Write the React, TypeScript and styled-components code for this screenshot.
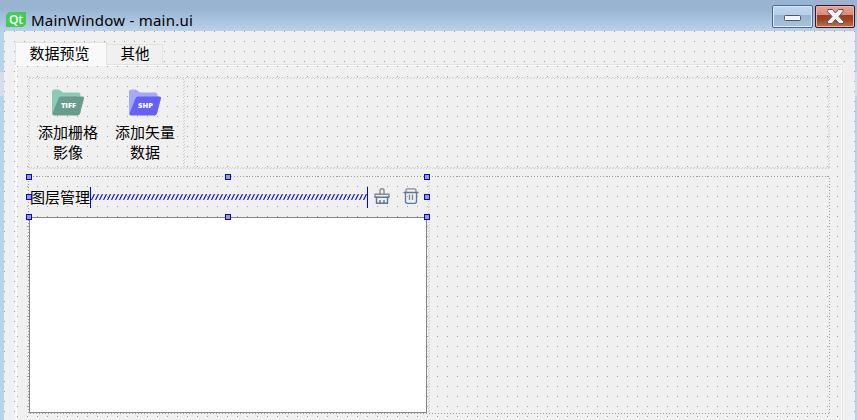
import React from 'react';
import styled, { createGlobalStyle, css } from 'styled-components';

const Global = createGlobalStyle`
  * { box-sizing: border-box; }
  html, body { margin: 0; padding: 0; overflow: hidden; }
  body { font-family: "Noto Sans CJK SC", sans-serif; font-size: 15px; color: #000; }
`;

const dots = (x: number, y: number) => css`
  background-color: #f0f0f0;
  background-image: conic-gradient(from 90deg at 9px 9px, #a0a0a0 25%, transparent 0);
  background-size: 10px 10px;
  background-position: ${x}px ${y}px;
`;

const Window = styled.div`
  width: 857px;
  height: 420px;
  display: flex;
  flex-direction: column;
  background: linear-gradient(#b9d1ea 0 72px, #d5dde6 72px 96px, #b9d1ea 96px);
  overflow: hidden;
`;

const TitleBar = styled.header`
  height: 31px;
  flex: none;
  display: flex;
  align-items: flex-start;
  padding: 5px 2px 0 6px;
  background: linear-gradient(#99b4d1, #9ab5d3 30%, #b9d1ea);
`;

const Logo = styled.svg`
  width: 20px;
  height: 15px;
  margin: 7px 5px 0 0;
  overflow: visible;
`;

const Title = styled.h1`
  margin: 4px 0 0;
  font: 15px/22px "Noto Sans", sans-serif;
  letter-spacing: 0.23px;
  flex: 1;
  white-space: nowrap;
`;

const WindowButton = styled.button<{ $close?: boolean }>`
  width: ${p => (p.$close ? 40 : 41)}px;
  height: 23px;
  margin-left: 2px;
  padding: 0;
  border: 1px solid ${p => (p.$close ? '#43101c' : '#496b97')};
  border-radius: 2px;
  box-shadow: inset 0 0 0 1px ${p => (p.$close ? '#e9b5a5' : '#dce8f5')};
  background: ${p =>
    p.$close
      ? 'linear-gradient(#eaa598, #d98a78 43%, #9c3e1e 44%, #9c4424 65%, #bb764a)'
      : 'linear-gradient(#bfd6ee, #b5cfea 43%, #98b4d2 44%, #a7c4df)'};
  svg { display: block; }
`;

const Client = styled.main`
  flex: 1;
  margin: 0 2px 0 4px;
  padding: 11px 11px 0;
  ${dots(-9, -9)}
`;

const Tabs = styled.nav`
  display: flex;
  align-items: flex-start;
  height: 22px;
`;

const Tab = styled.button<{ $active?: boolean }>`
  width: ${p => (p.$active ? 92 : 56)}px;
  height: ${p => (p.$active ? 23 : 21)}px;
  margin: ${p => (p.$active ? 0 : 2)}px 0 0;
  padding: ${p => (p.$active ? '0 3px 3px 0' : '0 0 3px 1px')};
  border: 1px solid #e3e3e3;
  border-width: ${p => (p.$active ? '1px 1px 0' : '1px 1px 1px 0')};
  background: ${p => (p.$active ? '#f9f9f9' : '#f0f0f0')};
  font: ${p => (p.$active ? '15px/18px' : '14.5px/16px')} "Noto Sans CJK SC", sans-serif;
  color: #000;
`;

const Page = styled.section`
  width: 828px;
  height: 356px;
  border: 1px solid #e3e3e3;
  border-bottom: 0;
  border-left-color: #f9f9f9;
  box-shadow: inset 1px 1px #fcfcfc, inset -1px 0 #fcfcfc, 2px 0 #f5f5f5;
  padding: 12px 0 0 12px;
  ${dots(-8, -8)}
`;

const dot = (color: string) => `conic-gradient(from 90deg at 2px 2px, ${color} 25%, transparent 0)`;
const L = dot('#cecece');
const D = dot('#a0a0a0');

const hatchRight = css`
  background:
    ${L} 100% 0 / 3px 3px repeat-y,
    ${L} calc(100% - 1px) 1px / 3px 3px repeat-y;
`;

const ToolRow = styled.div`
  width: 802px;
  height: 92px;
  padding: 2px;
  display: grid;
  grid-template-columns: 155px 1fr;
  column-gap: 8px;
  background:
    ${L} 0 -2px / 3px 3px repeat-x,
    ${L} 2px -1px / 3px 3px repeat-x,
    ${L} 0 100% / 3px 3px repeat-x,
    ${L} 1px calc(100% - 1px) / 3px 3px repeat-x,
    ${L} -2px 0 / 3px 3px repeat-y,
    ${L} -1px 1px / 3px 3px repeat-y,
    ${L} 100% 0 / 3px 3px repeat-y,
    ${L} calc(100% - 1px) 1px / 3px 3px repeat-y;
`;

const ToolBox = styled.div`
  display: flex;
  ${hatchRight}
`;

const Spare = styled.div`
  width: 3px;
  ${hatchRight}
`;

const Tool = styled.button`
  width: 77px;
  padding: 10px 1px 0 0;
  border: 0;
  background: none;
  display: flex;
  flex-direction: column;
  align-items: center;
  font: 15px/20px "Noto Sans CJK SC", sans-serif;
  color: #000;
  svg { margin-bottom: 6px; }
`;

const Workspace = styled.div`
  width: 802px;
  height: 238px;
  margin-top: 7px;
  padding: 1px;
  background:
    ${D} 0 -2px / 3px 3px repeat-x,
    ${D} 0 100% / 3px 3px repeat-x,
    ${D} -2px 0 / 3px 3px repeat-y,
    ${D} 100% 0 / 3px 3px repeat-y;
`;

const LayerPanel = styled.div`
  position: relative;
  width: 401px;
  ${hatchRight}
`;

const LayerHeader = styled.div`
  height: 40px;
  display: flex;
  align-items: center;
`;

const Label = styled.span`
  width: 61px;
  padding-left: 1px;
  line-height: 24px;
  white-space: nowrap;
`;

const Spacer = styled.div`
  width: 278px;
  height: 21px;
  border: solid #0000f0;
  border-width: 0 1px;
  display: flex;
  align-items: center;
  svg { display: block; }
`;

const IconButton = styled.button`
  width: 29px;
  height: 26px;
  margin-bottom: 2px;
  padding: 0 2px 0 0;
  border: 0;
  background: none;
  display: grid;
  place-items: center;
`;

const LayerList = styled.div`
  width: 398px;
  height: 196px;
  background: #fff;
  border: 1px solid #828790;
`;

const Handle = styled.i<{ $x: number; $y: number }>`
  position: absolute;
  left: ${p => p.$x}px;
  top: ${p => p.$y}px;
  width: 6px;
  height: 6px;
  border: 1px solid #0000ff;
  background: #a0a0a0;
`;

const Folder = ({ label, back, front }: { label: string; back: string; front: string }) => (
  <svg width="33" height="27" viewBox="0 0 33 27">
    <path d="M0 24V3Q0 .5 2.500 .5H6q1.500 0 3 1.500l2 1.500h15q2.500 0 2.500 2.500v18H3Q0 26 0 24z" fill={back} />
    <path d="M9 7.500h21.500q2 0 1.500 2l-4 15q-.5 2-2.500 2H2q-2 0-1.500-2l5.500-14q1-3 3-3z" fill={front} />
    <text x="16.500" y="19" textAnchor="middle" fontFamily="Open Sans, sans-serif" fontWeight="800" fontSize="7.500" fill="#fff">{label}</text>
  </svg>
);

const handles = [
  [0, 0], [199, 0], [398, 0], [0, 20], [398, 20], [0, 40], [199, 40], [398, 40],
];

export default function App() {
  return (
    <Window>
      <Global />
      <TitleBar>
        <Logo viewBox="0 0 20 15">
          <path d="M3 0h17v12l-3 3H0V3z" fill="#41cd52" />
          <text x="10" y="11.500" textAnchor="middle" fontFamily="Open Sans, sans-serif" fontWeight="600" fontSize="12" fill="#fff">Qt</text>
        </Logo>
        <Title>MainWindow - main.ui</Title>
        <WindowButton aria-label="Minimize">
          <svg width="39" height="21"><rect x="11.5" y="9.5" width="16" height="5" rx="1" fill="#f5f5f5" stroke="#535666" /></svg>
        </WindowButton>
        <WindowButton $close aria-label="Close">
          <svg width="38" height="21"><path d="M12 3.5h4.5l3 3.5 3-3.500H27v2L23 10.500l4.500 5v2H23l-3.500-4-3.500 4h-4.500v-2l4.500-5-4.500-5z" fill="#f3f3f3" stroke="#535666" /></svg>
        </WindowButton>
      </TitleBar>
      <Client>
        <Tabs>
          <Tab $active>数据预览</Tab>
          <Tab>其他</Tab>
        </Tabs>
        <Page>
          <ToolRow>
            <ToolBox>
              <Tool><Folder label="TIFF" back="#8bcab4" front="#699b8f" />添加栅格<br />影像</Tool>
              <Tool><Folder label="SHP" back="#a4aafa" front="#6460f8" />添加矢量<br />数据</Tool>
            </ToolBox>
            <Spare />
          </ToolRow>
          <Workspace>
            <LayerPanel>
              <LayerHeader>
                <Label>图层管理</Label>
                <Spacer>
                  <svg width="276" height="6">
                    <path d={Array.from({ length: 69 }, (_, i) => `M${i * 4 + 0.5} 6l3-6`).join('')} stroke="#0000f0" strokeWidth="1.1" />
                  </svg>
                </Spacer>
                <IconButton aria-label="Clear">
                  <svg width="16" height="16" fill="none" strokeWidth="1.4">
                    <path d="M6 6V2.500Q6 .8 8 .8t2 1.700V6M1 9.500V6.200h14v3.300" stroke="#858b92" />
                    <path d="M.8 9.300h14.400M2.500 9.500v5.800h11V9.500M6 12v3m4-3v3" stroke="#5b7698" />
                  </svg>
                </IconButton>
                <IconButton aria-label="Delete">
                  <svg width="16" height="16" fill="none" strokeWidth="1.3">
                    <path d="M.5 4.500h15M2.500 5v8.500q0 1.800 2 1.800h7q2 0 2-1.800V5" stroke="#5b7698" />
                    <path d="M3 4V2.300Q3 .8 4.500 .8h7Q13 .8 13 2.300V4M6.500 6.500v5.500m3-5.500v5.500" stroke="#858b92" />
                  </svg>
                </IconButton>
              </LayerHeader>
              <LayerList />
              {handles.map(([x, y]) => <Handle key={`${x}-${y}`} $x={x - 3} $y={y - 3} />)}
            </LayerPanel>
          </Workspace>
        </Page>
      </Client>
    </Window>
  );
}
